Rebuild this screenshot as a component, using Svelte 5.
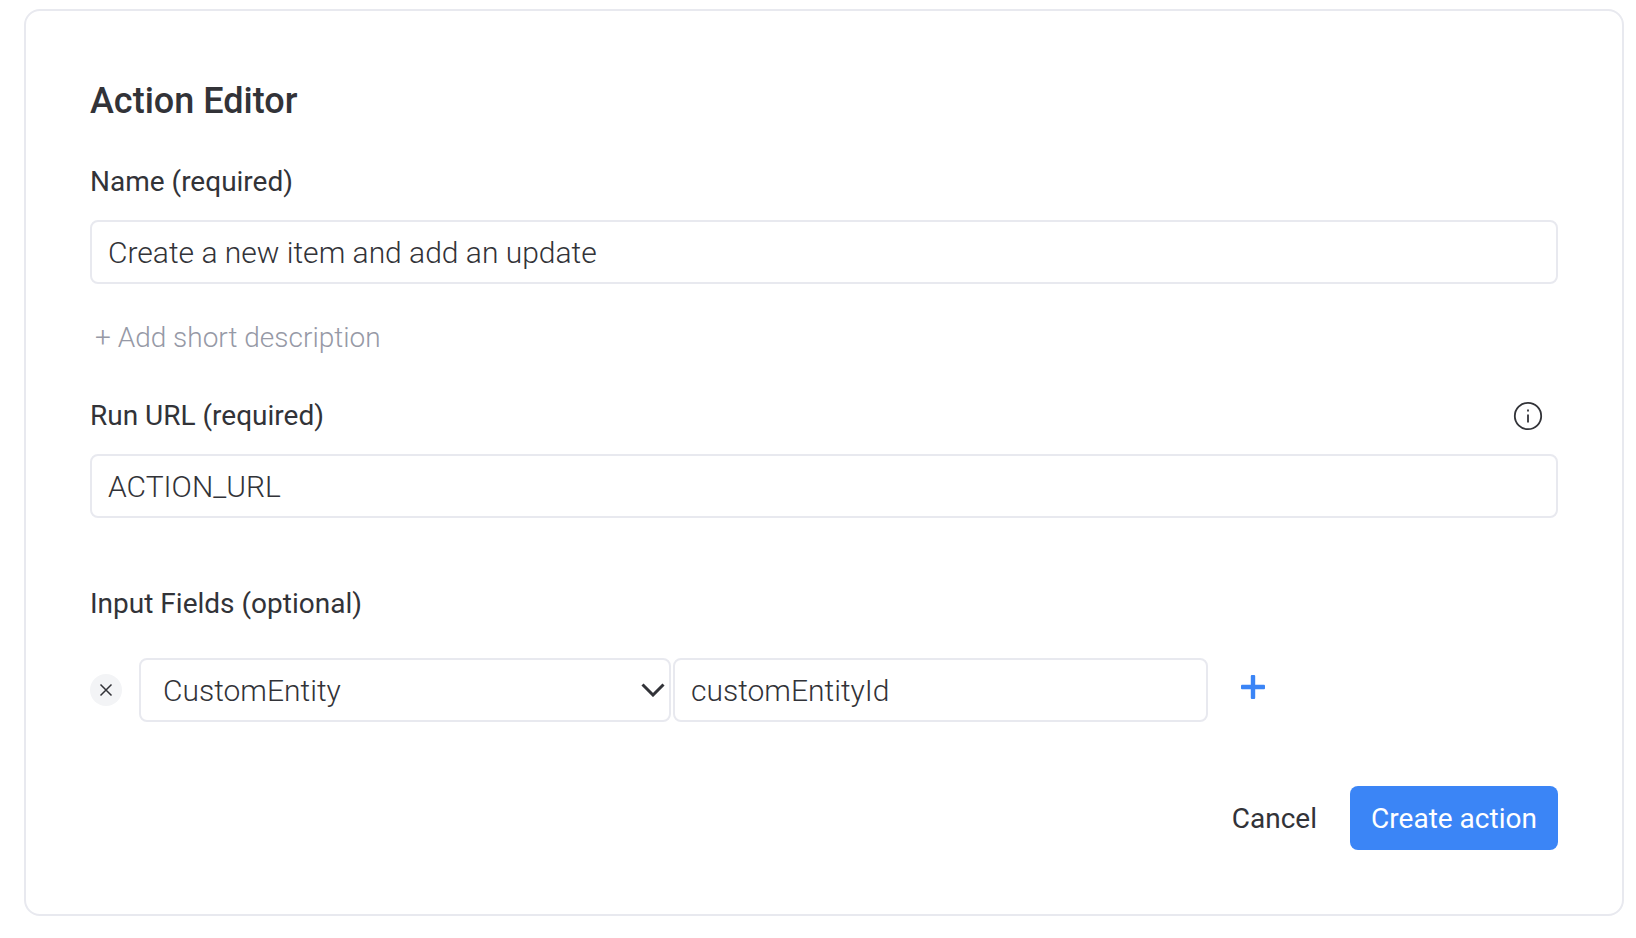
<script>
	let name = $state("Create a new item and add an update");
	let runUrl = $state("ACTION_URL");
	let fieldKey = $state("customEntityId");
</script>

<div class="card">
	<h1 class="title">Action Editor</h1>

	<div class="label name-label">Name (required)</div>
	<input class="text-input" bind:value={name} />

	<div class="add-description">+ Add short description</div>

	<div class="label-row">
		<div class="label">Run URL (required)</div>
		<svg class="info" width="30" height="30" viewBox="0 0 30 30" fill="none" stroke="#323338">
			<circle cx="15" cy="15" r="13.2" stroke-width="1.8" />
			<path d="M15 13.5v8" stroke-width="1.8" />
			<path d="M15 8.6v2" stroke-width="1.8" />
		</svg>
	</div>
	<input class="text-input" bind:value={runUrl} />

	<div class="label fields-label">Input Fields (optional)</div>
	<div class="field-row">
		<button class="remove" aria-label="Remove field">
			<svg width="14" height="14" viewBox="0 0 14 14" fill="none" stroke="#323338" stroke-width="1.5">
				<path d="M1.5 1.5l11 11M12.5 1.5l-11 11" />
			</svg>
		</button>
		<div class="select">
			<span>CustomEntity</span>
			<svg width="24" height="14" viewBox="0 0 24 14" fill="none" stroke="#323338" stroke-width="3">
				<path d="M1.5 1.5L12 12L22.5 1.5" />
			</svg>
		</div>
		<input class="text-input key-input" bind:value={fieldKey} />
		<button class="add" aria-label="Add field">
			<svg width="24" height="24" viewBox="0 0 24 24" fill="#3b85f6">
				<rect x="9.8" y="0" width="4.4" height="24" rx="1" />
				<rect x="0" y="9.8" width="24" height="4.4" rx="1" />
			</svg>
		</button>
	</div>

	<div class="actions">
		<button class="cancel">Cancel</button>
		<button class="primary">Create action</button>
	</div>
</div>

<style>
	:global(body) {
		margin: 0;
		background: #fff;
	}

	.card {
		box-sizing: border-box;
		width: 1600px;
		height: 907px;
		margin: 9px 0 0 24px;
		padding: 70px 64px 0;
		border: 2px solid #e8e9ef;
		border-radius: 16px;
		font-family: Roboto, sans-serif;
		color: #323338;
	}

	.title {
		margin: 0;
		font-size: 36px;
		line-height: 40px;
		font-weight: 500;
	}

	.label {
		font-size: 28px;
		line-height: 32px;
	}

	.name-label {
		margin: 45px 0 22px;
	}

	.text-input {
		box-sizing: border-box;
		display: block;
		width: 100%;
		height: 64px;
		padding: 0 16px;
		border: 2px solid #e8e9ef;
		border-radius: 8px;
		outline: none;
		background: #fff;
		font: 300 30px Roboto, sans-serif;
		color: #323338;
	}

	.add-description {
		margin: 38px 0 0 5px;
		font-size: 28px;
		line-height: 32px;
		font-weight: 300;
		color: #9699a6;
	}

	.label-row {
		display: flex;
		justify-content: space-between;
		align-items: center;
		margin: 46px 0 22px;
		padding-right: 15px;
		height: 32px;
	}

	.fields-label {
		margin: 70px 0 38px;
	}

	.field-row {
		display: flex;
		align-items: center;
	}

	.remove {
		display: flex;
		align-items: center;
		justify-content: center;
		width: 32px;
		height: 32px;
		margin-right: 17px;
		padding: 0;
		border: none;
		border-radius: 50%;
		background: #f3f4f6;
	}

	.select {
		box-sizing: border-box;
		display: flex;
		align-items: center;
		justify-content: space-between;
		width: 532px;
		height: 64px;
		margin-right: 2px;
		padding: 0 4px 0 22px;
		border: 2px solid #e8e9ef;
		border-radius: 8px;
		font-size: 30px;
		font-weight: 300;
	}

	.key-input {
		width: 535px;
	}

	.add {
		display: flex;
		margin: -6px 0 0 33px;
		padding: 0;
		border: none;
		background: none;
	}

	.actions {
		display: flex;
		justify-content: flex-end;
		align-items: center;
		gap: 33px;
		margin-top: 64px;
	}

	.cancel {
		padding: 0;
		border: none;
		background: none;
		font: 400 28px Roboto, sans-serif;
		color: #323338;
	}

	.primary {
		width: 208px;
		height: 64px;
		padding: 0;
		border: none;
		border-radius: 8px;
		background: #3b85f6;
		font: 400 28px Roboto, sans-serif;
		color: #fff;
	}
</style>
